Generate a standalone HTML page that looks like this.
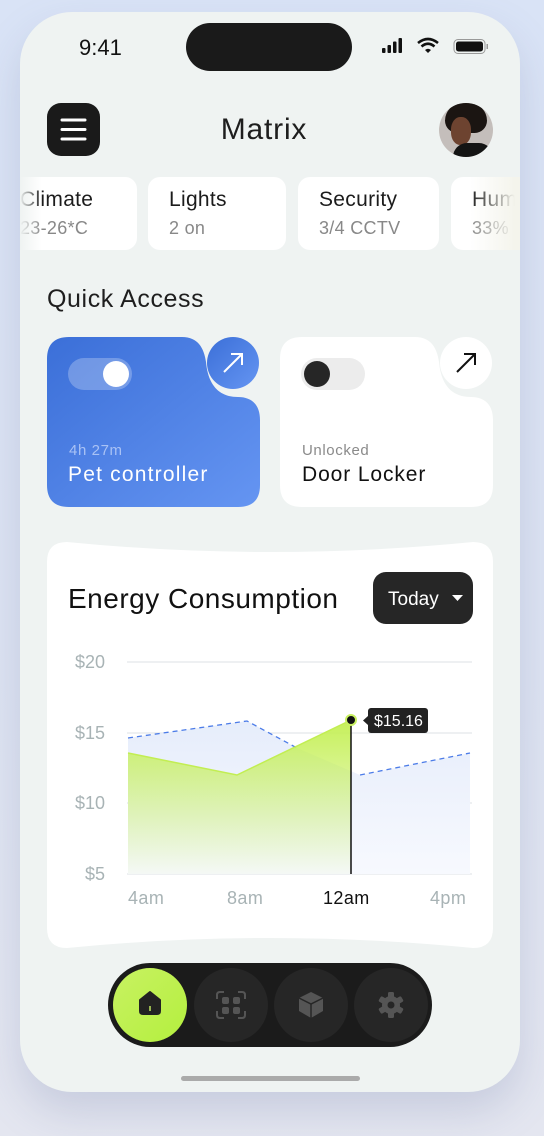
<!DOCTYPE html>
<html><head><style>
*{margin:0;padding:0;box-sizing:border-box}
body{width:544px;height:1136px;background:linear-gradient(180deg,#d9e3f6,#dde3f2 60%,#e4e6f0);font-family:"Liberation Sans",sans-serif;position:relative;overflow:hidden}
.phone{position:absolute;left:20px;top:12px;width:500px;height:1080px;border-radius:52px;background:#eff3f2;overflow:hidden;box-shadow:0 20px 40px rgba(120,130,170,.25)}
.a{position:absolute}
.chip{position:absolute;top:165px;height:73px;background:#fff;border-radius:12px;padding:11px 0 0 21px}
.chip b{display:block;font-weight:400;font-size:21px;color:#1c1c1c;letter-spacing:.3px}
.chip i{display:block;font-style:normal;font-size:18px;color:#888;margin-top:6px;letter-spacing:.3px}
</style></head><body>
<div class="phone">
<div class="a" style="left:59px;top:23px;font-size:22px;color:#111;font-weight:500">9:41</div>
<div class="a" style="left:166px;top:11px;width:166px;height:48px;border-radius:24px;background:#1a1a1a"></div>
<svg class="a" style="left:362px;top:25px" width="110" height="20">
<rect x="0" y="11" width="3.5" height="5" rx="1" fill="#111"/><rect x="5.5" y="8" width="3.5" height="8" rx="1" fill="#111"/><rect x="11" y="4.5" width="3.5" height="11.5" rx="1" fill="#111"/><rect x="16.5" y="1" width="3.5" height="15" rx="1" fill="#111"/>
<path d="M36 6 Q46 -2 56 6" stroke="#111" stroke-width="2.6" fill="none"/><path d="M39.5 9.5 Q46 4 52.5 9.5" stroke="#111" stroke-width="2.6" fill="none"/><path d="M43 13 L46 16 L49 13 Q46 10.5 43 13Z" fill="#111"/>
<rect x="72" y="2.5" width="31" height="14" rx="4" fill="none" stroke="#999" stroke-width="1"/><rect x="74" y="4.5" width="27" height="10" rx="2.5" fill="#111"/><rect x="104.5" y="7" width="1.5" height="5" fill="#999"/>
</svg>
<div class="a" style="left:27px;top:91px;width:53px;height:53px;border-radius:14px;background:#1a1a1a"></div>
<svg class="a" style="left:27px;top:91px" width="53" height="53"><path d="M15 17H38M15 26.5H38M15 36H38" stroke="#fff" stroke-width="3" stroke-linecap="round"/></svg>
<div class="a" style="left:-6px;width:500px;top:101px;text-align:center;font-size:30px;color:#1e1e1e;letter-spacing:.8px">Matrix</div>
<div class="a" style="left:419px;top:91px;width:54px;height:54px;border-radius:50%;overflow:hidden;background:#c4bebb">
<div class="a" style="left:6px;top:0;width:42px;height:30px;border-radius:20px 20px 14px 14px;background:#1b1512"></div>
<div class="a" style="left:12px;top:14px;width:20px;height:28px;border-radius:45%;background:#6d4330"></div>
<div class="a" style="left:14px;top:40px;width:40px;height:20px;border-radius:14px 14px 0 0;background:#141414"></div>
</div>

<div class="chip" style="left:-30px;width:147px;padding-left:30px"><b>Climate</b><i>23-26*C</i></div>
<div class="a" style="left:0;top:165px;width:22px;height:73px;background:linear-gradient(90deg,#eff3f2,rgba(239,243,242,0))"></div>
<div class="chip" style="left:128px;width:138px"><b>Lights</b><i>2 on</i></div>
<div class="chip" style="left:278px;width:141px"><b>Security</b><i>3/4 CCTV</i></div>
<div class="chip" style="left:431px;width:100px"><b>Humidity</b><i>33%</i></div>
<div class="a" style="left:450px;top:165px;width:50px;height:73px;background:linear-gradient(90deg,rgba(244,244,236,0),#f4f4ec 90%)"></div>

<div class="a" style="left:27px;top:273px;font-size:25px;color:#1e1e1e;letter-spacing:.6px">Quick Access</div>
<svg class="a" style="left:-20px;top:-12px" width="544" height="1136">
<defs>
<linearGradient id="bl" x1="0" y1="0" x2="1" y2="1"><stop offset="0" stop-color="#3b6fd8"/><stop offset="1" stop-color="#6595f2"/></linearGradient>
<linearGradient id="gr" x1="0" y1="0" x2="0" y2="1"><stop offset="0" stop-color="#c6f05a"/><stop offset="1" stop-color="#c6f05a" stop-opacity=".05"/></linearGradient>
<linearGradient id="lb" x1="0" y1="0" x2="0" y2="1"><stop offset="0" stop-color="#e6edfb"/><stop offset="1" stop-color="#f7f9fe"/></linearGradient>
<linearGradient id="nv" x1="0" y1="0" x2="1" y2="1"><stop offset="0" stop-color="#c8f262"/><stop offset="1" stop-color="#b4ef3e"/></linearGradient>
</defs>
<path d="M69 337H182C198 337 204 348 206 362C208 384 218 397 238 397C252 397 260 405 260 420V485Q260 507 238 507H69Q47 507 47 485V359Q47 337 69 337Z" fill="url(#bl)"/>
<circle cx="233" cy="363" r="26" fill="url(#bl)"/>
<path d="M224 372L242 354M231 354H242V365" stroke="#fff" stroke-width="2" fill="none"/>
<rect x="68" y="358" width="64" height="32" rx="16" fill="#fff" fill-opacity=".25"/><circle cx="116" cy="374" r="13" fill="#fff"/>
<text x="69" y="455" font-size="15" fill="#a9c2f5" font-family="Liberation Sans" letter-spacing=".6">4h 27m</text>
<text x="68" y="481" font-size="21" fill="#fff" font-family="Liberation Sans" letter-spacing="1.2">Pet controller</text>
<path d="M302 337H415C431 337 437 348 439 362C441 384 451 397 471 397C485 397 493 405 493 420V485Q493 507 471 507H302Q280 507 280 485V359Q280 337 302 337Z" fill="#fff"/>
<circle cx="466" cy="363" r="26" fill="#fff"/>
<path d="M457 372L475 354M464 354H475V365" stroke="#111" stroke-width="2" fill="none"/>
<rect x="301" y="358" width="64" height="32" rx="16" fill="#ececec"/><circle cx="317" cy="374" r="13" fill="#262626"/>
<text x="302" y="455" font-size="15" fill="#8a8a8a" font-family="Liberation Sans" letter-spacing=".6">Unlocked</text>
<text x="302" y="481" font-size="21" fill="#111" font-family="Liberation Sans" letter-spacing=".9">Door Locker</text>

<path d="M67 542Q270 562 473 542Q493 542 493 562V928Q493 948 473 948Q270 928 67 948Q47 948 47 928V562Q47 542 67 542Z" fill="#fff"/>
<text x="68" y="608" font-size="28" fill="#111" font-family="Liberation Sans" letter-spacing=".5">Energy Consumption</text>
<rect x="373" y="572" width="100" height="52" rx="13" fill="#262626"/>
<text x="388" y="605" font-size="19" fill="#fff" font-family="Liberation Sans">Today</text>
<path d="M452 595H463L457.5 601Z" fill="#fff"/>
<g stroke="#e3e6ea" stroke-width="1.2"><path d="M127 662H472M127 733H472M127 803H472M127 874H472"/></g>
<g font-size="18" fill="#a8b3b5" font-family="Liberation Sans" text-anchor="end"><text x="105" y="668">$20</text><text x="105" y="739">$15</text><text x="105" y="809">$10</text><text x="105" y="880">$5</text></g>
<path d="M128 738L247 721L297 748L360 775L470 753V874H128Z" fill="url(#lb)"/>
<path d="M128 738L247 721L297 748M360 775L470 753" stroke="#4c7ce8" stroke-width="1.3" stroke-dasharray="5 4" fill="none"/>
<path d="M128 753L237 775L351 720V874H128Z" fill="url(#gr)"/>
<path d="M128 753L237 775L351 720" stroke="#c2ee52" stroke-width="1.5" fill="none"/>
<path d="M351 720V874" stroke="#111" stroke-width="1.5"/>
<circle cx="351" cy="720" r="5" fill="#111" stroke="#c8f060" stroke-width="2"/>
<rect x="368" y="708" width="60" height="25" rx="3" fill="#222"/><path d="M368 716L363 720.5L368 725Z" fill="#222"/>
<text x="374" y="726" font-size="16" fill="#fff" font-family="Liberation Sans">$15.16</text>
<g font-size="18" fill="#a8b3b5" font-family="Liberation Sans" letter-spacing=".4"><text x="128" y="904">4am</text><text x="227" y="904">8am</text><text x="323" y="904" fill="#111">12am</text><text x="430" y="904">4pm</text></g>

<rect x="108" y="963" width="324" height="84" rx="42" fill="#1b1b1b"/>
<circle cx="150" cy="1005" r="37" fill="url(#nv)"/>
<circle cx="231" cy="1005" r="37" fill="#262626"/><circle cx="311" cy="1005" r="37" fill="#262626"/><circle cx="391" cy="1005" r="37" fill="#262626"/>
<path d="M140 1000L150 992L160 1000V1011Q160 1014 157 1014H143Q140 1014 140 1011Z" fill="#222" stroke="#222" stroke-width="2" stroke-linejoin="round"/>
<rect x="149.3" y="1006" width="1.4" height="5" fill="#c8f262"/>
<g fill="none" stroke="#555" stroke-width="2"><path d="M217 999V995Q217 992 220 992H224M238 992H242Q245 992 245 995V999M245 1011V1015Q245 1018 242 1018H238M224 1018H220Q217 1018 217 1015V1011"/></g>
<g fill="#555"><rect x="222" y="997" width="7" height="7" rx="2"/><rect x="233" y="997" width="7" height="7" rx="2"/><rect x="222" y="1007" width="7" height="7" rx="2"/><rect x="233" y="1007" width="7" height="7" rx="2"/></g>
<path d="M311 992L323 998V1011L311 1018L299 1011V998Z" fill="#555"/><path d="M299 998L311 1004L323 998M311 1004V1018" stroke="#262626" stroke-width="1.5" fill="none"/>
<g transform="translate(391 1005)" fill="#555"><circle r="9"/><g id="t"><rect x="-3" y="-13" width="6" height="6" rx="1.5"/></g><use href="#t" transform="rotate(60)"/><use href="#t" transform="rotate(120)"/><use href="#t" transform="rotate(180)"/><use href="#t" transform="rotate(240)"/><use href="#t" transform="rotate(300)"/><circle r="3.5" fill="#262626"/></g>
<rect x="181" y="1076" width="179" height="5" rx="2.5" fill="#aaa"/>
</svg>
</div>
</body></html>
